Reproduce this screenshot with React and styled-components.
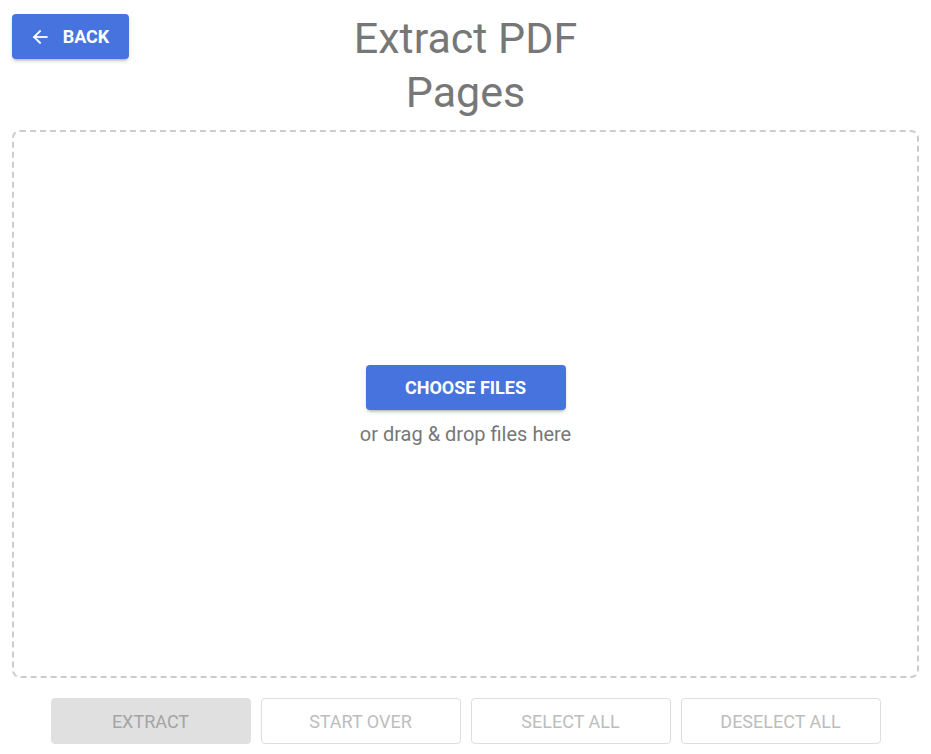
import styled, { createGlobalStyle } from 'styled-components'

const GlobalStyle = createGlobalStyle`
  html, body {
    margin: 0;
    padding: 0;
    background: #ffffff;
  }
  body {
    font-family: Roboto, "Liberation Sans", Arial, sans-serif;
  }
  * {
    box-sizing: border-box;
  }
`

const Page = styled.div`
  height: 754px;
  padding: 0 12px 10px;
  display: flex;
  flex-direction: column;
`

const Header = styled.header`
  display: grid;
  grid-template-columns: 1fr auto 1fr;
  align-items: start;
  height: 130px;
`

const BackButton = styled.button`
  justify-self: start;
  margin-top: 14px;
  height: 45px;
  width: 117px;
  display: flex;
  align-items: center;
  justify-content: center;
  gap: 13px;
  padding: 0 16px 0 14px;
  border: none;
  border-radius: 4px;
  background: #4673dd;
  color: #fff;
  font-family: Roboto, "Liberation Sans", sans-serif;
  font-size: 18px;
  font-weight: 700;
  text-transform: uppercase;
  box-shadow: 0 3px 3px -2px rgba(0, 0, 0, 0.25), 0 2px 4px rgba(0, 0, 0, 0.12);
  cursor: pointer;
`

const Title = styled.h1`
  margin: 11px 0 0;
  width: 280px;
  text-align: center;
  font-family: Roboto, "Liberation Sans", sans-serif;
  font-size: 43px;
  font-weight: 400;
  line-height: 54px;
  color: #777777;
`

const DropZone = styled.div`
  height: 548px;
  border: 2px dashed #cccccc;
  border-radius: 8px;
  display: flex;
  flex-direction: column;
  align-items: center;
  justify-content: center;
  gap: 12px;
  padding-top: 2px;
`

const ChooseButton = styled.button`
  width: 200px;
  height: 45px;
  border: none;
  border-radius: 4px;
  background: #4673dd;
  color: #fff;
  font-family: Roboto, "Liberation Sans", sans-serif;
  font-size: 18px;
  font-weight: 700;
  text-transform: uppercase;
  box-shadow: 0 3px 3px -2px rgba(0, 0, 0, 0.25), 0 2px 4px rgba(0, 0, 0, 0.12);
  cursor: pointer;
`

const Hint = styled.p`
  margin: 0;
  font-size: 20px;
  line-height: 24px;
  color: #777777;
`

const Actions = styled.div`
  margin-top: 20px;
  display: flex;
  justify-content: center;
  gap: 10px;
`

const ActionButton = styled.button`
  width: 200px;
  height: 46px;
  border-radius: 4px;
  border: 1px solid ${(p) => (p.$filled ? '#e0e0e0' : '#dedede')};
  background: ${(p) => (p.$filled ? '#e0e0e0' : '#ffffff')};
  color: ${(p) => (p.$filled ? '#a4a4a4' : '#bdbdbd')};
  font-family: Roboto, "Liberation Sans", sans-serif;
  font-size: 18px;
  font-weight: 400;
  text-transform: uppercase;
`

const ArrowLeft = () => (
  <svg width="20" height="20" viewBox="0 0 24 24" fill="none" stroke="currentColor" strokeWidth="2.2" strokeLinecap="square">
    <path d="M20 12H5" />
    <path d="M12 5l-7 7 7 7" />
  </svg>
)

const App = () => {
  return (
    <>
      <GlobalStyle />
      <Page>
        <Header>
          <BackButton>
            <ArrowLeft />
            Back
          </BackButton>
          <Title>Extract PDF Pages</Title>
          <div />
        </Header>
        <DropZone>
          <ChooseButton>Choose Files</ChooseButton>
          <Hint>or drag &amp; drop files here</Hint>
        </DropZone>
        <Actions>
          <ActionButton $filled disabled>Extract</ActionButton>
          <ActionButton disabled>Start Over</ActionButton>
          <ActionButton disabled>Select All</ActionButton>
          <ActionButton disabled>Deselect All</ActionButton>
        </Actions>
      </Page>
    </>
  )
}

export default App
